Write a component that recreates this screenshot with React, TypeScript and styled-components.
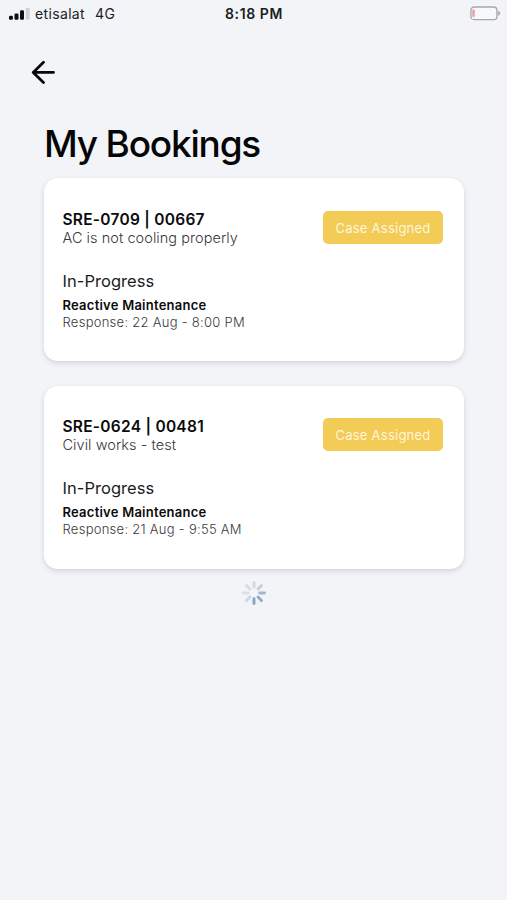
import React from "react";
import styled, { createGlobalStyle } from "styled-components";

const GlobalStyle = createGlobalStyle`
  * { box-sizing: border-box; }
  body {
    margin: 0;
    background: #f2f4f8;
    font-family: Inter, "Liberation Sans", sans-serif;
    color: #0b0b0d;
  }
`;

const Screen = styled.div`
  display: flex;
  flex-direction: column;
  width: 100%;
  height: 900px;
  overflow: hidden;
  background: #f2f4f8;
`;

const StatusBar = styled.header`
  display: grid;
  grid-template-columns: 1fr auto 1fr;
  align-items: center;
  height: 28px;
  padding: 0 6px 0 9px;
  font-size: 14px;
  line-height: 28px;
  color: #1c1d20;
`;

const Carrier = styled.div`
  display: flex;
  align-items: center;
`;

const CarrierName = styled.span`
  margin: 0 10px 0 5px;
  letter-spacing: 0.35px;
`;

const Network = styled.span`
  letter-spacing: 0.4px;
`;

const Clock = styled.time`
  margin-right: 2px;
  font-size: 14px;
  font-weight: 600;
  letter-spacing: 0.6px;
`;

const Battery = styled.svg`
  justify-self: end;
  margin-top: -1px;
`;

const NavBar = styled.nav`
  display: flex;
  height: 94px;
  padding: 32px 0 0 31px;
`;

const BackButton = styled.button`
  display: block;
  width: 24px;
  height: 26px;
  padding: 0;
  border: 0;
  background: none;
`;

const Content = styled.main`
  padding: 0 43px 0 44px;
`;

const Title = styled.h1`
  margin: 0;
  height: 56px;
  font-size: 37px;
  font-weight: 500;
  line-height: 43px;
  letter-spacing: -1.2px;
  color: #060607;
  white-space: nowrap;
`;

const BookingList = styled.div`
  display: flex;
  flex-direction: column;
  gap: 24.5px;
`;

const Card = styled.article`
  height: 183px;
  padding: 32.5px 21px 0 18.5px;
  border-radius: 14px;
  background: #fff;
  box-shadow: 0 2px 5px rgba(40, 45, 55, 0.16);
  white-space: nowrap;
`;

const CardHeader = styled.div`
  display: flex;
  justify-content: space-between;
  height: 59px;
`;

const Reference = styled.h2`
  margin: 0;
  font-size: 15.5px;
  font-weight: 600;
  line-height: 18.4px;
  letter-spacing: 0.26px;
`;

const Summary = styled.p`
  margin: 0;
  font-size: 14.5px;
  font-weight: 350;
  line-height: 18px;
  letter-spacing: 0.05px;
  color: #38393d;
`;

const Badge = styled.span`
  width: 120px;
  height: 33.4px;
  border-radius: 5px;
  background: #f3cb57;
  color: #fff6dc;
  font-size: 13px;
  line-height: 34px;
  letter-spacing: 0.25px;
  text-align: center;
`;

const Stage = styled.p`
  margin: 0;
  font-size: 16.5px;
  line-height: 22px;
  letter-spacing: 0.04px;
  color: #1c1c1f;
`;

const Service = styled.p`
  margin: 5px 0 0;
  font-size: 13px;
  font-weight: 600;
  line-height: 17px;
  letter-spacing: 0.24px;
`;

const Response = styled.p`
  margin: 0;
  font-size: 13px;
  font-weight: 350;
  line-height: 16px;
  letter-spacing: 0.27px;
  color: #38393d;
`;

const Loading = styled.div`
  display: flex;
  justify-content: center;
  padding-top: 11.5px;
`;

const bookings = [
  { reference: "SRE-0709 | 00667", summary: "AC is not cooling properly", response: "22 Aug - 8:00 PM" },
  { reference: "SRE-0624 | 00481", summary: "Civil works - test", response: "21 Aug - 9:55 AM" },
];

const spokes = ["#d3d8e2", "#c6cddd", "#a5b4d0", "#94a6ca", "#8da1c9", "#cbd4e4", "#d9dee8", "#d9dce4"];

function SignalIcon() {
  return (
    <svg width="21" height="14" viewBox="0 0 21 14">
      <rect x="0" y="8.7" width="3.9" height="4" rx="1.2" fill="#0d0e10" />
      <rect x="5.5" y="6.5" width="4" height="6.2" rx="1.2" fill="#0d0e10" />
      <rect x="11" y="3.2" width="4" height="9.5" rx="1.2" fill="#0d0e10" />
      <rect x="16.8" y="0.7" width="3.8" height="12" rx="1.2" fill="#cfd1d4" />
    </svg>
  );
}

function BatteryIcon() {
  return (
    <Battery width="31" height="15" viewBox="0 0 31 15">
      <rect x="0.9" y="1" width="26" height="12.6" rx="3.2" fill="#f8f9fa" stroke="#a5a7a9" strokeWidth="1.3" />
      <rect x="2.3" y="3.5" width="2.5" height="7.5" rx="1" fill="#ee9c9f" />
      <path d="M28.2 4.8C30.8 5.6 30.8 9 28.2 9.8Z" fill="#a5a7a9" />
    </Battery>
  );
}

function BackIcon() {
  return (
    <svg width="24" height="26" viewBox="0 0 24 26" fill="none" stroke="#08080a" strokeWidth="2.8" strokeLinecap="round" strokeLinejoin="round">
      <path d="M22.5 12.4H2.2M12.5 2.2L2.2 12.4L12.5 22.6" />
    </svg>
  );
}

function Spinner() {
  return (
    <svg width="26" height="26" viewBox="-13 -13 26 26">
      {spokes.map((color, i) => (
        <line key={i} x1="0" y1="-5.7" x2="0" y2="-10.5" stroke={color} strokeWidth="2.9" strokeLinecap="round" transform={`rotate(${i * 45})`} />
      ))}
    </svg>
  );
}

export default function App() {
  return (
    <Screen>
      <GlobalStyle />
      <StatusBar>
        <Carrier>
          <SignalIcon />
          <CarrierName>etisalat</CarrierName>
          <Network>4G</Network>
        </Carrier>
        <Clock>8:18 PM</Clock>
        <BatteryIcon />
      </StatusBar>
      <NavBar>
        <BackButton aria-label="Back">
          <BackIcon />
        </BackButton>
      </NavBar>
      <Content>
        <Title>My Bookings</Title>
        <BookingList>
          {bookings.map((b) => (
            <Card key={b.reference}>
              <CardHeader>
                <div>
                  <Reference>{b.reference}</Reference>
                  <Summary>{b.summary}</Summary>
                </div>
                <Badge>Case Assigned</Badge>
              </CardHeader>
              <Stage>In-Progress</Stage>
              <Service>Reactive Maintenance</Service>
              <Response>Response: {b.response}</Response>
            </Card>
          ))}
        </BookingList>
        <Loading>
          <Spinner />
        </Loading>
      </Content>
    </Screen>
  );
}
